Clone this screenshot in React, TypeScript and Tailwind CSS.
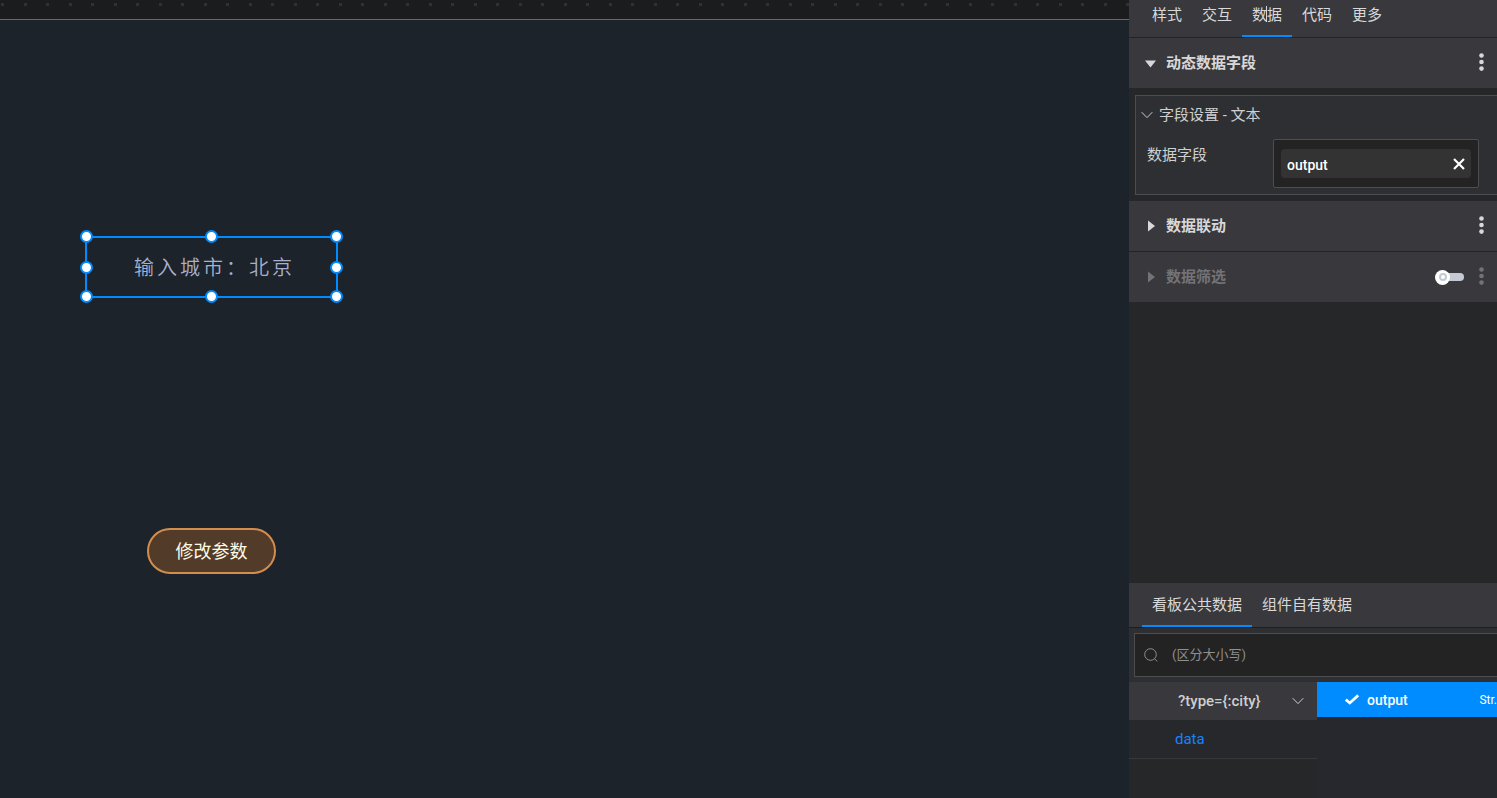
import { useState } from 'react';
import clsx from 'clsx';

const panelTabs = ['样式', '交互', '数据', '代码', '更多'];
const sourceTabs = ['看板公共数据', '组件自有数据'];

const handles = [
  '-left-[7px] -top-2',
  'left-[118px] -top-2',
  '-right-[7px] -top-2',
  '-left-[7px] top-[23px]',
  '-right-[7px] top-[23px]',
  '-left-[7px] -bottom-[7px]',
  'left-[118px] -bottom-[7px]',
  '-right-[7px] -bottom-[7px]',
];

function Kebab() {
  return (
    <button type="button" aria-label="更多操作" className="flex h-5 w-3 items-center justify-center">
      <svg viewBox="0 0 6 20" className="h-5 w-1.5" fill="currentColor">
        <circle cx="2.5" cy="2.5" r="2.3" />
        <circle cx="2.5" cy="9" r="2.3" />
        <circle cx="2.5" cy="15.6" r="2.3" />
      </svg>
    </button>
  );
}

function Chevron() {
  return (
    <svg viewBox="0 0 12 8" className="h-2 w-3 shrink-0" fill="none" stroke="currentColor">
      <path d="M0.7 1.2 6 6.6 11.3 1.2" />
    </svg>
  );
}

type SectionProps = {
  title: string;
  open?: boolean;
  disabled?: boolean;
  children?: React.ReactNode;
};

function SectionHeader({ title, open, disabled, children }: SectionProps) {
  return (
    <div
      className={clsx(
        'flex h-[50px] items-center bg-[#38383d] pl-4 pr-[9px]',
        disabled ? 'text-[#737377]' : 'text-[#d8d8d8]'
      )}
    >
      <button type="button" aria-expanded={!!open} className="flex flex-1 items-center gap-2.5 text-left font-bold">
        <svg viewBox="0 0 11 12" className="h-3 w-[11px]" fill="currentColor">
          {open ? <path d="M0 3.5h11L5.5 10.5z" /> : <path d="M3 0.5v11L10 6z" />}
        </svg>
        {title}
      </button>
      {children}
      <Kebab />
    </div>
  );
}

function Canvas() {
  return (
    <main className="flex min-w-0 flex-1 flex-col">
      <svg className="h-[19px] w-full bg-[#1b1c1e]" aria-hidden="true">
        <defs>
          <pattern id="ticks" width="45" height="19" patternUnits="userSpaceOnUse">
            <rect x="1" y="3" width="3" height="3" fill="#303133" />
            <rect x="24" y="3" width="3" height="3" fill="#303133" />
          </pattern>
        </defs>
        <rect width="100%" height="19" fill="url(#ticks)" />
      </svg>
      <div className="relative flex-1 border-t border-[#67696c] bg-[#1c232a]">
        {/* Selected text component */}
        <div className="absolute left-[85px] top-[216px] flex h-[62px] w-[253px] items-center justify-center border-2 border-[#008bff]">
          <p className="pl-1.5 pt-0.5 text-xl font-[350] tracking-[3px] text-[#a9b0cf]">输入城市：北京</p>
          {handles.map((pos) => (
            <span key={pos} className={`absolute size-[13px] rounded-full border-2 border-[#008bff] bg-white ${pos}`} />
          ))}
        </div>

        <button
          type="button"
          className="absolute left-[147px] top-[508px] h-[46px] w-[129px] rounded-full border-2 border-[#d38d4d] bg-[#533b29] pt-0.5 text-lg text-[#fffbe3]"
        >
          修改参数
        </button>
      </div>
    </main>
  );
}

function FieldSettings() {
  return (
    <div className="mb-1.5 ml-1.5 mt-[7px] border-y border-l border-[#4c4d50] bg-[#2e2f33] pb-1.5">
      <button type="button" className="flex h-[38px] w-full items-center gap-1.5 pl-[5px] text-[#cfcfcf]">
        <Chevron />
        字段设置 - 文本
      </button>
      <div className="flex items-start pl-[11px] pr-[18px] pt-[5px]">
        <label htmlFor="field" className="w-[126px] shrink-0 pt-[5px] text-[#cfcfcf]">
          数据字段
        </label>
        <div className="min-w-0 flex-1 rounded-xs border border-[#4c4d50] bg-[#232323] px-[7px] py-[9px]">
          <div className="flex h-[29px] items-center rounded bg-[#333] px-1.5">
            <input
              id="field"
              readOnly
              defaultValue="output"
              className="min-w-0 flex-1 bg-transparent pt-0.5 text-sm font-medium text-white outline-none"
            />
            <button type="button" aria-label="清除" className="text-white">
              <svg viewBox="0 0 12 12" className="size-3" fill="none" stroke="currentColor" strokeWidth="2.2">
                <path d="M1 1l10 10M11 1 1 11" />
              </svg>
            </button>
          </div>
        </div>
      </div>
    </div>
  );
}

function DataSource() {
  const [tab, setTab] = useState(0);

  return (
    <section className="flex h-[215px] flex-col bg-[#2e2f33]">
      <div className="flex h-[45px] border-b border-[#1e1e20] bg-[#38383d] pl-[13px]">
        {sourceTabs.map((name, i) => (
          <button
            key={name}
            type="button"
            onClick={() => setTab(i)}
            className={clsx(
              'border-b-2 px-2.5 pt-0.5 text-[#d8d8d8]',
              i === tab ? 'border-[#008bff]' : 'border-transparent'
            )}
          >
            {name}
          </button>
        ))}
      </div>

      <div className="pb-[5px] pl-[5px] pt-[5px]">
        <label className="flex h-11 items-center gap-3.5 border-y border-l border-[#4c4d50] bg-[#232323] pl-[9px] text-[#8f8f8f]">
          <svg viewBox="0 0 14 14" className="size-3.5" fill="none" stroke="currentColor">
            <circle cx="6.5" cy="6.5" r="5.8" />
            <path d="M10.5 10.8 13.3 13.3" />
          </svg>
          <input
            type="search"
            aria-label="搜索"
            placeholder="(区分大小写)"
            className="min-w-0 flex-1 bg-transparent text-[13px] outline-none placeholder:text-[#8f8f8f]"
          />
        </label>
      </div>

      <div className="flex flex-1">
        <div className="w-[188px] bg-[#262728]">
          <button
            type="button"
            className="flex h-[38px] w-full items-center justify-between bg-[#38383d] pl-[49px] pr-[13px] font-medium text-[#cfcfcf]"
          >
            {'?type={:city}'}
            <Chevron />
          </button>
          <button
            type="button"
            className="block h-[39px] w-full border-b border-[#38383b] bg-[#27282c] pl-[46px] text-left text-[#1683ff]"
          >
            data
          </button>
        </div>
        <div className="min-w-0 flex-1 bg-[#27282d]">
          <button type="button" className="flex h-[35px] w-full items-center bg-[#008bff] pl-7 text-white">
            <svg viewBox="0 0 14 12" className="mr-2 h-3 w-3.5 shrink-0" fill="none" stroke="currentColor" strokeWidth="2.8">
              <path d="M0.8 5.6 4.8 9 13.2 1.4" />
            </svg>
            <span className="flex-1 text-left text-sm font-medium">output</span>
            <span className="shrink-0 text-xs">Str.</span>
          </button>
        </div>
      </div>
    </section>
  );
}

export default function App() {
  const [tab, setTab] = useState(2);

  return (
    <div className="flex h-screen overflow-hidden bg-[#1c232a] font-[Roboto,'Noto_Sans_CJK_SC',sans-serif] text-[15px] leading-[22px]">
      <Canvas />
      <aside className="flex w-[368px] shrink-0 flex-col bg-[#262728]">
        <nav className="flex h-[38px] border-b border-[#242427] bg-[#38383d] pl-[13px]">
          {panelTabs.map((name, i) => (
            <button
              key={name}
              type="button"
              onClick={() => setTab(i)}
              className={clsx(
                'relative border-b-2 px-2.5 pb-1.5 text-[#d8d8d8]',
                i === tab ? 'border-[#008bff]' : 'border-transparent'
              )}
            >
              {name}
              {i === tab && <span className="absolute left-6 top-1.5 h-4 w-px bg-[#d8d8d8]" />}
            </button>
          ))}
        </nav>
        <div className="flex-1">
          <SectionHeader title="动态数据字段" open />
          <FieldSettings />
          <SectionHeader title="数据联动" />
          <div className="h-px bg-[#242427]" />
          <SectionHeader title="数据筛选" disabled>
            <label className="mr-3 flex h-4 w-[29px] items-center">
              <input type="checkbox" aria-label="启用数据筛选" className="peer sr-only" />
              <span className="z-10 flex size-[15px] shrink-0 items-center justify-center rounded-full bg-white">
                <span className="size-2 rounded-full border-2 border-[#c5c9d4]" />
              </span>
              <span className="-ml-1 h-2 flex-1 rounded-r-full bg-[#c5c9d4]" />
            </label>
          </SectionHeader>
        </div>
        <DataSource />
      </aside>
    </div>
  );
}
